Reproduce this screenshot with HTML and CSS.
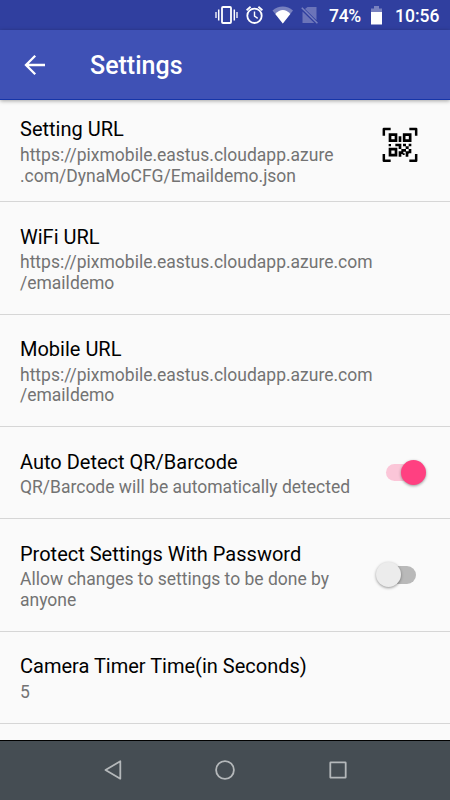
FILE: index.html
```
<!DOCTYPE html>
<html lang="en">
<head>
<meta charset="utf-8">
<title>Settings</title>
<link rel="stylesheet" href="styles.css">
</head>
<body>
<div class="screen">
  <div class="status">
    <svg class="status-icons" width="120" height="30" viewBox="0 0 120 30">
      <g fill="none" stroke="#fff">
        <rect x="17" y="7" width="9" height="16" rx="1" stroke-width="1.8"/>
        <path d="M13.7 9.500v11M29.3 9.500v11" stroke-width="1.5"/>
        <path d="M11 12v6M32 12v6" stroke-width="1.3"/>
        <circle cx="49.5" cy="15.8" r="7.200" stroke-width="1.8"/>
        <path d="M49.5 11.5v4.6l3.2 2.2" stroke-width="1.4"/>
        <path d="M41.6 10.2l4-3.4M57.4 10.2l-4-3.4" stroke-width="1.8"/>
      </g>
      <path d="M67.5 10.5C73.5 5 82 5 88 10.5L77.8 23.5z" fill="#7881bf"/>
      <path d="M70.3 14C75 8.800 80.8 8.800 85.3 14L77.8 23.5z" fill="#fff"/>
      <path d="M102.500 7h9v13.2L100 9zM97.5 11.5L109.3 23H97.5z" fill="#6b74b9"/>
      <path d="M96.8 7.8L112.4 23.2" stroke="#7881bf" stroke-width="1.5"/>
    </svg>
    <span class="percent">74%</span>
    <svg class="battery" width="12" height="20" viewBox="0 0 12 20">
      <path d="M0 2.5h3V0h5v2.5h3v5H0z" fill="#7881bf"/>
      <path d="M0 6h11v12.500H0z" fill="#fff"/>
    </svg>
    <span class="clock">10:56</span>
  </div>
  <header class="appbar">
    <svg width="22" height="22" viewBox="0 0 22 22"><path d="M21 11H2M11.2 1.8L2 11l9.2 9.2" fill="none" stroke="#fff" stroke-width="2.3"/></svg>
    <h1>Settings</h1>
  </header>
  <main class="list">
    <section class="row row-first">
      <div class="text"><h2>Setting URL</h2><p>https://pixmobile.eastus.cloudapp.azure<br>.com/DynaMoCFG/Emaildemo.json</p></div>
      <svg class="qr" width="36" height="36" viewBox="36 36 108 108">
        <g fill="none" stroke="#000">
          <path d="M41.5 62V42H62M118 42h20.500V62M138.500 117v20.500H118M62 137.500H41.500V117" stroke-width="7.500" stroke-linejoin="round"/>
          <path d="M60 59h18v18H60zM102.500 59h18v18h-18zM60 102.500h18v18H60z" stroke-width="8"/>
        </g>
        <path d="M86 64h8v17h-8zM56 87h7v7h-7zM76 86h18v16h-8v-8H76zM99 86h9v8h-9zM116 86h8v8h-8zM107 94h9v8h-9zM94 102h14v8h-8v7h-6v8h-8v-16h8zM116 102h8v13h-8zM107 109h9v8h-9zM107 117h8v8h-8zM98 115h6v5h-6z"/>
      </svg>
    </section>
    <section class="row"><div class="text"><h2>WiFi URL</h2><p>https://pixmobile.eastus.cloudapp.azure.com<br>/emaildemo</p></div></section>
    <section class="row"><div class="text"><h2>Mobile URL</h2><p>https://pixmobile.eastus.cloudapp.azure.com<br>/emaildemo</p></div></section>
    <section class="row row-short"><div class="text"><h2>Auto Detect QR/Barcode</h2><p>QR/Barcode will be automatically detected</p></div><div class="switch switch-on"><i class="thumb"></i></div></section>
    <section class="row"><div class="text"><h2>Protect Settings With Password</h2><p>Allow changes to settings to be done by<br>anyone</p></div><div class="switch switch-off"><i class="thumb"></i></div></section>
    <section class="row row-short"><div class="text"><h2>Camera Timer Time(in Seconds)</h2><p>5</p></div></section>
  </main>
  <nav class="nav">
    <svg width="20" height="22" viewBox="0 0 20 22"><path d="M17.300 2.300v17.400L2.500 11z"/></svg>
    <svg width="20" height="22" viewBox="0 0 20 22"><circle cx="10" cy="11" r="8.900"/></svg>
    <svg width="20" height="22" viewBox="0 0 20 22"><rect x="2.300" y="3.300" width="15.400" height="15.400" rx=".5"/></svg>
  </nav>
</div>
</body>
</html>
```
FILE: styles.css
```
* { box-sizing: border-box; }
body { margin: 0; font-family: Roboto, sans-serif; }
h1, h2, p { margin: 0; font-weight: 400; }
svg { display: block; flex: none; }
.screen {
  width: 450px;
  height: 800px;
  display: flex;
  flex-direction: column;
  overflow: hidden;
  background: #fafafa;
}
.status {
  height: 30px;
  flex: none;
  display: flex;
  align-items: center;
  background: #303f9f;
  color: #fff;
  font-size: 17.5px;
  font-weight: 500;
  line-height: 30px;
}
.status-icons { margin-left: 205px; }
.percent { width: 46px; padding-left: 4px; padding-top: 1px; letter-spacing: -.3px; white-space: nowrap; }
.battery { margin-top: 2px; }
.clock { margin-left: 12px; padding-top: 1px; white-space: nowrap; }
.appbar {
  height: 70px;
  flex: none;
  display: flex;
  align-items: center;
  gap: 44px;
  padding-left: 24px;
  background: #3f51b5;
  border-bottom: 1px solid #1635a8;
  color: #fff;
  box-shadow: 0 1px 4px rgba(0, 0, 0, .35);
  z-index: 1;
}
.appbar h1 { font-size: 25px; font-weight: 500; line-height: 30px; padding-top: 3px; }
.list { flex: 1; min-height: 0; overflow: hidden; }
.row {
  height: 112.5px;
  display: flex;
  justify-content: space-between;
  align-items: center;
  padding-left: 20px;
  border-bottom: 1px solid #d6d6d6;
}
.row-first { height: 102px; }
.row-short { height: 92px; }
.text { align-self: flex-start; padding-top: 22.6px; white-space: nowrap; }
.row-first .text { padding-top: 17px; }
.text h2 { font-size: 20px; line-height: 24px; color: #000; }
.text p { margin-top: 3.8px; font-size: 17.5px; line-height: 20.5px; color: #737373; }
.row-first .text p { margin-top: 4px; }
.qr { margin: 0 32px 12px 0; }
.switch {
  width: 36px;
  height: 17.5px;
  border-radius: 9px;
  display: flex;
  align-items: center;
}
.switch-on { background: #fbc6d8; margin-right: 28px; justify-content: flex-end; }
.switch-off { background: #b9b9b9; margin-right: 34px; }
.thumb {
  width: 25px;
  height: 25px;
  flex: none;
  border-radius: 50%;
  box-shadow: 0 1px 3px rgba(0, 0, 0, .4);
}
.switch-on .thumb { background: #ff4081; margin-right: -4px; }
.switch-off .thumb { background: #ececec; margin-left: -4px; }
.nav {
  height: 60px;
  flex: none;
  display: flex;
  justify-content: center;
  align-items: center;
  gap: 92.5px;
  padding-bottom: 2px;
  background: #454d53;
  border-top: 1px solid #000;
}
.nav svg { fill: none; stroke: #b4b8ba; stroke-width: 1.8; stroke-linejoin: round; }
```
